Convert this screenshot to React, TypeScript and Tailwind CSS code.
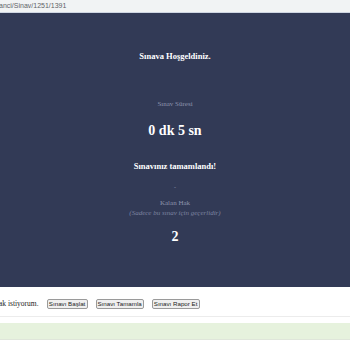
import React from 'react';

const serif = { fontFamily: '"Liberation Serif", "Times New Roman", serif' };

const ActionButton: React.FC<{ label: string; width: string }> = ({ label, width }) => (
  <button
    className={`${width} h-[10px] flex items-center justify-center border border-[#9a9a9a] rounded-[2px] bg-[#efefef] text-[6.2px] leading-[8px] text-[#222] font-['Liberation_Sans',Arial,sans-serif]`}
  >
    {label}
  </button>
);

export default function App() {
  return (
    <div className="w-[350px] h-[350px] overflow-hidden bg-white" style={serif}>
      {/* address bar */}
      <div className="h-[12px] bg-[#f1f3f4] text-[7px] leading-[12px] text-[#5f6368] font-['Liberation_Sans',Arial,sans-serif] whitespace-nowrap -indent-[1px]">
        anci/Sinav/1251/1391
      </div>
      <div className="h-[1px] bg-[#cfd6e2]" />

      {/* exam panel */}
      <div className="h-[274px] bg-[#323a56] flex flex-col items-center pt-[37px] text-center">
        <div className="text-[8.5px] leading-[12px] font-bold text-white">Sınava Hoşgeldiniz.</div>
        <div className="mt-[37px] text-[7px] leading-[10px] text-[#8d94ad]">Sınav Süresi</div>
        <div className="mt-[13px] text-[14px] leading-[18px] font-bold text-white">0 dk 5 sn</div>
        <div className="mt-[20px] text-[8.5px] leading-[12px] font-bold text-white">Sınavınız tamamlandı!</div>
        <div className="mt-[10px] text-[6px] leading-[10px] text-[#8d94ad]">-</div>
        <div className="mt-[6px] text-[7px] leading-[10px] text-[#8d94ad]">Kalan Hak</div>
        <div className="text-[7px] leading-[10px] italic text-[#7d84a0]">(Sadece bu sınav için geçerlidir)</div>
        <div className="mt-[10px] text-[14px] leading-[18px] font-bold text-white">2</div>
      </div>

      {/* actions */}
      <div className="pt-[12px] flex items-center h-[22px] whitespace-nowrap">
        <span className="text-[7.5px] leading-[10px] text-[#222] -ml-[1px]">ak istiyorum.</span>
        <div className="ml-[8px] flex items-center gap-[8px]">
          <ActionButton label="Sınavı Başlat" width="w-[41px]" />
          <ActionButton label="Sınavı Tamamla" width="w-[48px]" />
          <ActionButton label="Sınavı Rapor Et" width="w-[48px]" />
        </div>
      </div>
      <div className="mt-[7px] h-[1px] bg-[#ececec]" />
      <div className="mt-[6px] h-[17px] bg-[#e6f2dd] border-b border-[#dfe6da]" />
    </div>
  );
}
